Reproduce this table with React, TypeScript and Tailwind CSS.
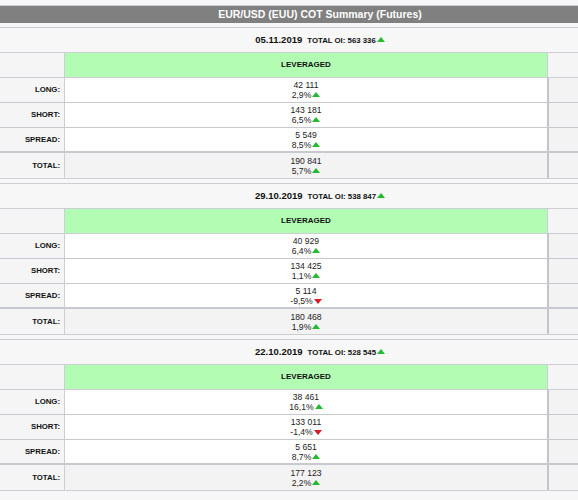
import React from "react";

interface Cell {
  value: string;
  pct: string;
  up: boolean;
}

interface Report {
  date: string;
  oi: string;
  oiUp: boolean;
  rows: { label: string; cell: Cell }[];
}

const reports: Report[] = [
  {
    date: "05.11.2019",
    oi: "563 336",
    oiUp: true,
    rows: [
      { label: "LONG:", cell: { value: "42 111", pct: "2,9%", up: true } },
      { label: "SHORT:", cell: { value: "143 181", pct: "6,5%", up: true } },
      { label: "SPREAD:", cell: { value: "5 549", pct: "8,5%", up: true } },
      { label: "TOTAL:", cell: { value: "190 841", pct: "5,7%", up: true } },
    ],
  },
  {
    date: "29.10.2019",
    oi: "538 847",
    oiUp: true,
    rows: [
      { label: "LONG:", cell: { value: "40 929", pct: "6,4%", up: true } },
      { label: "SHORT:", cell: { value: "134 425", pct: "1,1%", up: true } },
      { label: "SPREAD:", cell: { value: "5 114", pct: "-9,5%", up: false } },
      { label: "TOTAL:", cell: { value: "180 468", pct: "1,9%", up: true } },
    ],
  },
  {
    date: "22.10.2019",
    oi: "528 545",
    oiUp: true,
    rows: [
      { label: "LONG:", cell: { value: "38 461", pct: "16,1%", up: true } },
      { label: "SHORT:", cell: { value: "133 011", pct: "-1,4%", up: false } },
      { label: "SPREAD:", cell: { value: "5 651", pct: "8,7%", up: true } },
      { label: "TOTAL:", cell: { value: "177 123", pct: "2,2%", up: true } },
    ],
  },
];

// small green / red triangles next to the numbers
const Arrow = ({ up }: { up: boolean }) =>
  up ? (
    <svg width="8" height="5" viewBox="0 0 8 5" className="inline-block ml-[1px] align-[1px]">
      <polygon points="4,0 8,5 0,5" fill="#22bb2a" />
    </svg>
  ) : (
    <svg width="8" height="5" viewBox="0 0 8 5" className="inline-block ml-[1px] align-[0px]">
      <polygon points="0,0 8,0 4,5" fill="#dd1a22" />
    </svg>
  );

const Section = ({ r }: { r: Report }) => (
  <div className="mt-[4px] border-t border-b border-[#cdcdd4]">
    <div className="h-[25px] flex items-center justify-center gap-[5px] bg-[#f7f7f7] border-b border-[#cdcdd4]">
      <span className="text-[9.5px] font-bold text-[#111]">{r.date}</span>
      <span className="text-[7.8px] font-bold text-[#111] mt-[1px]">
        TOTAL OI: {r.oi}
        <Arrow up={r.oiUp} />
      </span>
    </div>
    <div className="grid grid-cols-[65px_482px_1fr] h-[25px] border-b border-[#cdcdd4]">
      <div className="bg-[#f5f5f5] border-r border-[#cdcdd4]" />
      <div className="bg-[#b3fcb3] flex items-center justify-center text-[8px] font-bold text-[#111]">
        LEVERAGED
      </div>
      <div className="bg-[#f5f5f5] border-l border-[#cdcdd4]" />
    </div>
    {r.rows.map((row, i) => {
      const total = row.label === "TOTAL:";
      return (
        <div
          key={i}
          className={`grid grid-cols-[65px_482px_1fr] h-[25px] ${
            i < r.rows.length - 1 ? "border-b" : ""
          } ${i === r.rows.length - 2 ? "border-b-2" : ""} border-[#c8c8d0]`}
        >
          <div className="bg-[#f5f5f5] border-r border-[#cdcdd4] flex items-center justify-end pr-[4px] text-[7.8px] font-bold text-[#111]">
            {row.label}
          </div>
          <div
            className={`${total ? "bg-[#f3f3f3]" : "bg-white"} flex flex-col items-center justify-center text-[8.6px] leading-[10px] text-[#222]`}
          >
            <span>{row.cell.value}</span>
            <span>
              {row.cell.pct}
              <Arrow up={row.cell.up} />
            </span>
          </div>
          <div className="bg-[#f3f3f3] border-l-2 border-[#c4c4cc]" />
        </div>
      );
    })}
  </div>
);

export default function App() {
  return (
    <div className="w-[578px] h-[500px] overflow-hidden bg-[#f7f7f7]">
      <div className="w-[640px] pt-[5px] font-['Liberation_Sans',Arial,sans-serif]">
        <div className="border-t border-[#cdcdd4] bg-[#808080] h-[18px] flex items-center justify-center text-[10.5px] font-bold text-white">
          EUR/USD (EUU) COT Summary (Futures)
        </div>
        {reports.map((r, i) => (
          <Section key={i} r={r} />
        ))}
      </div>
    </div>
  );
}
